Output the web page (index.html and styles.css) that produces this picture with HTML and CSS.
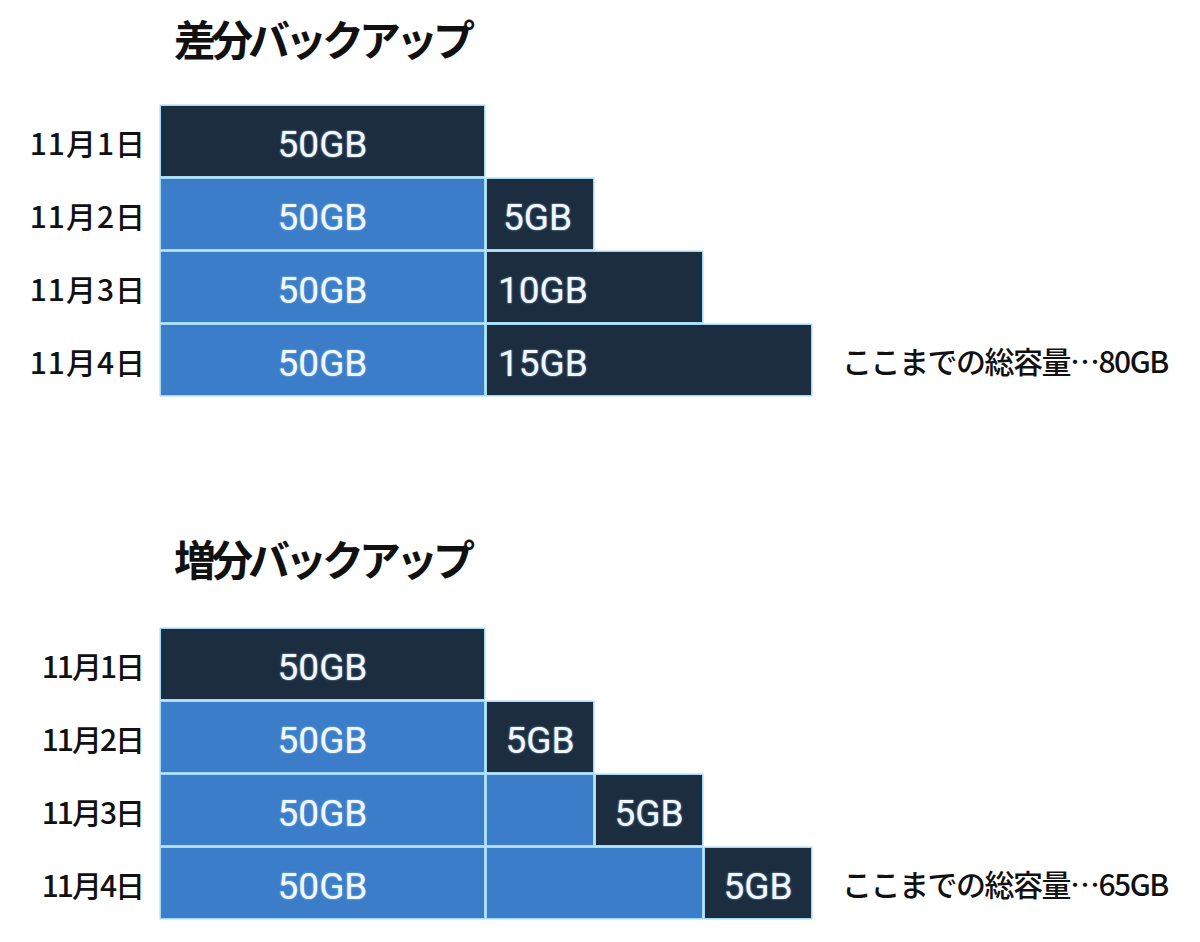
FILE: index.html
```html
<!DOCTYPE html>
<html lang="ja">
<head>
<meta charset="utf-8">
<title>差分バックアップ と 増分バックアップ</title>
<link rel="stylesheet" href="styles.css">
</head>
<body>
<div class="page">
  <section class="block block-diff">
    <h2 class="title">差分バックアップ</h2>
    <div class="chart">
      <div class="row">
        <div class="label">11月1日</div>
        <div class="bars"><div class="bar dark full">50GB</div></div>
      </div>
      <div class="row">
        <div class="label">11月2日</div>
        <div class="bars"><div class="bar blue full">50GB</div><div class="bar dark seg left w1">5GB</div></div>
      </div>
      <div class="row">
        <div class="label">11月3日</div>
        <div class="bars"><div class="bar blue full">50GB</div><div class="bar dark seg left w2">10GB</div></div>
      </div>
      <div class="row">
        <div class="label">11月4日</div>
        <div class="bars"><div class="bar blue full">50GB</div><div class="bar dark seg left w3">15GB</div></div>
        <div class="total">ここまでの総容量…80GB</div>
      </div>
    </div>
  </section>

  <section class="block block-inc">
    <h2 class="title">増分バックアップ</h2>
    <div class="chart">
      <div class="row">
        <div class="label">11月1日</div>
        <div class="bars"><div class="bar dark full">50GB</div></div>
      </div>
      <div class="row">
        <div class="label">11月2日</div>
        <div class="bars"><div class="bar blue full">50GB</div><div class="bar dark seg w1">5GB</div></div>
      </div>
      <div class="row">
        <div class="label">11月3日</div>
        <div class="bars"><div class="bar blue full">50GB</div><div class="bar blue seg w1"></div><div class="bar dark seg w1">5GB</div></div>
      </div>
      <div class="row">
        <div class="label">11月4日</div>
        <div class="bars"><div class="bar blue full">50GB</div><div class="bar blue seg w2"></div><div class="bar dark seg w1">5GB</div></div>
        <div class="total">ここまでの総容量…65GB</div>
      </div>
    </div>
  </section>
</div>
</body>
</html>
```
FILE: styles.css
```css
html, body {
  margin: 0;
  padding: 0;
  background: #ffffff;
}

body {
  font-family: "Noto Sans CJK JP", "Noto Sans", sans-serif;
  color: #111111;
}

.page {
  width: 1200px;
  height: 942px;
  padding-top: 14px;
  box-sizing: border-box;
  overflow: hidden;
}

.title {
  margin: 0;
  padding-left: 174px;
  height: 48px;
  line-height: 48px;
  font-size: 42px;
  font-weight: 700;
  letter-spacing: -5px;
  color: #111111;
}

.chart {
  margin-top: 44px;
  display: flex;
  flex-direction: column;
  gap: 3px;
}

.block-inc {
  margin-top: 139px;
}

.block-inc .chart {
  margin-top: 47px;
}

.row {
  display: flex;
  align-items: center;
  height: 70px;
}

.label {
  width: 161px;
  box-sizing: border-box;
  padding-right: 15px;
  text-align: right;
  font-size: 30px;
  font-weight: 500;
  letter-spacing: 1px;
  line-height: 1;
  padding-top: 2px;
}

.block-inc .label {
  letter-spacing: -2px;
  padding-right: 18px;
}

.bars {
  display: flex;
  gap: 3px;
  height: 100%;
}

.bar {
  height: 100%;
  display: flex;
  align-items: center;
  justify-content: center;
  box-sizing: border-box;
  padding-top: 6px;
  box-shadow: 0 0 0 1.5px #a2daf5;
  font-family: Roboto, "Liberation Sans", Arial, sans-serif;
  font-weight: 400;
  font-size: 37px;
  color: #f2f7fb;
  text-shadow: 0 0 2px rgba(160, 215, 250, 0.9);
}

.dark {
  background: #1d2d40;
}

.blue {
  background: #3b7dc8;
}

.full {
  width: 323px;
}

.seg.left {
  justify-content: flex-start;
  padding-left: 11px;
}

.w1 { width: 106px; }
.w2 { width: 215px; }
.w3 { width: 324px; }

.block-diff .w1.left {
  padding-left: 16px;
}

.total {
  margin-left: 31px;
  font-size: 30px;
  font-weight: 500;
  letter-spacing: -1.5px;
  line-height: 1;
  color: #111111;
  white-space: nowrap;
}
```
